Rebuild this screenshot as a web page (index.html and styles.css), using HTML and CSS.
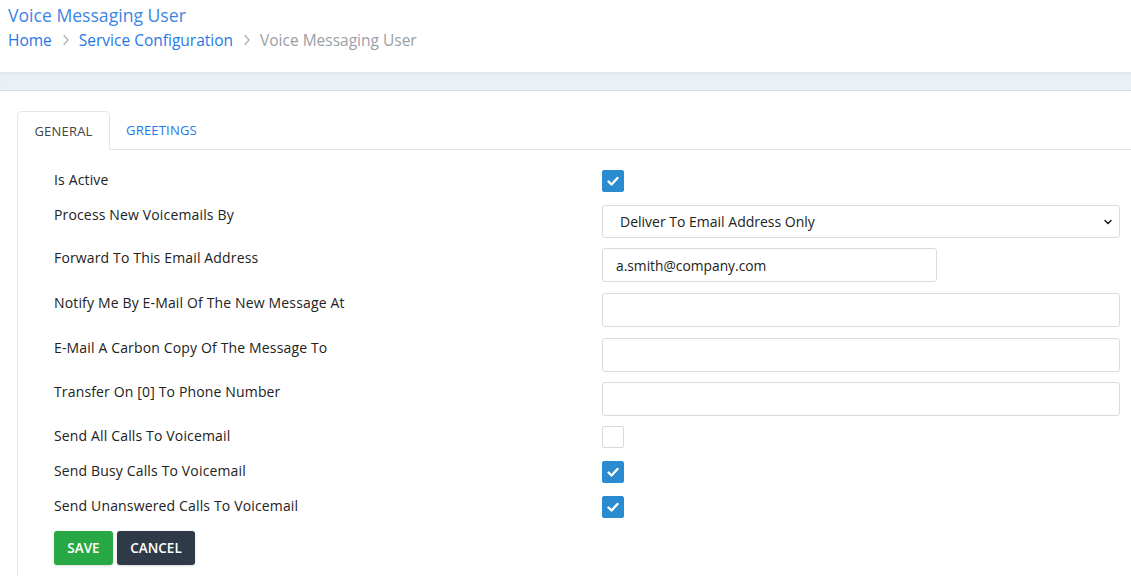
FILE: index.html
```html
<!DOCTYPE html>
<html lang="en">
<head>
<meta charset="utf-8">
<title>Voice Messaging User</title>
<link rel="stylesheet" href="styles.css">
</head>
<body>
<header class="page-header">
  <h1 class="page-title">Voice Messaging User</h1>
  <nav class="breadcrumb">
    <a class="crumb" href="#">Home</a>
    <svg class="sep" viewBox="0 0 8 12" width="8" height="12"><path d="M2 1.5 L6 6 L2 10.5" fill="none" stroke="#a8adb3" stroke-width="1.2" stroke-linecap="round" stroke-linejoin="round"/></svg>
    <a class="crumb" href="#">Service Configuration</a>
    <svg class="sep" viewBox="0 0 8 12" width="8" height="12"><path d="M2 1.5 L6 6 L2 10.5" fill="none" stroke="#a8adb3" stroke-width="1.2" stroke-linecap="round" stroke-linejoin="round"/></svg>
    <span class="crumb current">Voice Messaging User</span>
  </nav>
</header>
<div class="band"></div>
<main class="content">
  <div class="tabs">
    <div class="tab active">GENERAL</div>
    <div class="tab">GREETINGS</div>
    <div class="tab-fill"></div>
  </div>
  <div class="panel">
    <form class="form">
      <div class="row">
        <label class="label">Is Active</label>
        <div class="control"><span class="check on"><svg viewBox="0 0 22 22" width="22" height="22"><path d="M6.5 11.5 L9.5 14.5 L15.5 8" fill="none" stroke="#fff" stroke-width="2.4" stroke-linecap="round" stroke-linejoin="round"/></svg></span></div>
      </div>
      <div class="row">
        <label class="label">Process New Voicemails By</label>
        <div class="control">
          <div class="select">
            <span>Deliver To Email Address Only</span>
            <svg class="caret" viewBox="0 0 10 10" width="10" height="10"><path d="M2 3.5 L5 6.5 L8 3.5" fill="none" stroke="#222" stroke-width="1.6" stroke-linecap="round" stroke-linejoin="round"/></svg>
          </div>
        </div>
      </div>
      <div class="row tight3">
        <label class="label">Forward To This Email Address</label>
        <div class="control"><div class="input short">a.smith@company.com</div></div>
      </div>
      <div class="row tight2">
        <label class="label">Notify Me By E-Mail Of The New Message At</label>
        <div class="control"><div class="input"></div></div>
      </div>
      <div class="row tight2">
        <label class="label">E-Mail A Carbon Copy Of The Message To</label>
        <div class="control"><div class="input"></div></div>
      </div>
      <div class="row tight3">
        <label class="label">Transfer On [0] To Phone Number</label>
        <div class="control"><div class="input"></div></div>
      </div>
      <div class="row tight3">
        <label class="label">Send All Calls To Voicemail</label>
        <div class="control"><span class="check"></span></div>
      </div>
      <div class="row">
        <label class="label">Send Busy Calls To Voicemail</label>
        <div class="control"><span class="check on"><svg viewBox="0 0 22 22" width="22" height="22"><path d="M6.5 11.5 L9.5 14.5 L15.5 8" fill="none" stroke="#fff" stroke-width="2.4" stroke-linecap="round" stroke-linejoin="round"/></svg></span></div>
      </div>
      <div class="row">
        <label class="label">Send Unanswered Calls To Voicemail</label>
        <div class="control"><span class="check on"><svg viewBox="0 0 22 22" width="22" height="22"><path d="M6.5 11.5 L9.5 14.5 L15.5 8" fill="none" stroke="#fff" stroke-width="2.4" stroke-linecap="round" stroke-linejoin="round"/></svg></span></div>
      </div>
      <div class="actions">
        <button type="button" class="btn save">SAVE</button>
        <button type="button" class="btn cancel">CANCEL</button>
      </div>
    </form>
  </div>
</main>
</body>
</html>
```
FILE: styles.css
```css
* { box-sizing: border-box; }
html, body { margin: 0; padding: 0; }
body {
  font-family: "Open Sans", "Noto Sans", sans-serif;
  font-size: 14px;
  color: #222;
  background: #fff;
  width: 1131px;
  height: 576px;
  overflow: hidden;
}
.page-header {
  padding: 3px 8px 0 8px;
  height: 72px;
}
.page-title {
  margin: 0;
  font-size: 17.6px;
  font-weight: 400;
  line-height: 24px;
  color: #3c86e6;
}
.breadcrumb {
  margin-top: 2px;
  display: flex;
  align-items: center;
  font-size: 15.5px;
  line-height: 22px;
}
.crumb { color: #1f78e8; text-decoration: none; }
.crumb.current { color: #9aa0a6; }
.sep {
  display: block;
  margin: 0 9px 0 10px;
}
.band {
  height: 19px;
  background: #eaf1f5;
  border-top: 1px solid #e3eaef;
  border-bottom: 1px solid #d6dde3;
  box-shadow: inset 0 1px 2px rgba(0,0,0,0.04);
}
.content {
  padding: 20px 0 0 17px;
}
.tabs {
  display: flex;
  align-items: flex-end;
  height: 39px;
}
.tab {
  height: 39px;
  padding: 0 16px;
  display: flex;
  align-items: center;
  font-size: 13px;
  color: #1f78e8;
  border-bottom: 1px solid #e2e5e8;
  letter-spacing: 0.2px;
}
.tab.active {
  color: #444;
  border: 1px solid #e2e5e8;
  border-bottom-color: #fff;
  border-radius: 5px 5px 0 0;
  width: 93px;
  justify-content: center;
}
.tab-fill {
  flex: 1;
  height: 39px;
  border-bottom: 1px solid #e2e5e8;
}
.panel {
  border-left: 1px solid #e2e5e8;
  height: 440px;
  padding: 20px 11px 0 36px;
}
.form {
  display: flex;
  flex-direction: column;
  gap: 13px;
}
.row {
  display: grid;
  grid-template-columns: 548px 1fr;
  align-items: start;
}
.row.tight2 { margin-top: -2px; }
.row.tight3 { margin-top: -3px; }
.label {
  line-height: 20px;
  font-size: 14px;
  letter-spacing: 0.15px;
  color: #222;
}
.control { display: flex; }
.check {
  width: 22px;
  height: 22px;
  border: 1px solid #d9d9d9;
  border-radius: 2px;
  background: #fff;
  display: block;
}
.check.on {
  background: #2b8bd0;
  border-color: #2b8bd0;
}
.check svg { display: block; margin: -1px 0 0 -1px; }
.select {
  flex: 1;
  height: 33px;
  border: 1px solid #d8dce0;
  border-radius: 3px;
  display: flex;
  align-items: center;
  justify-content: space-between;
  padding: 0 6px 0 17px;
  font-size: 14px;
  color: #222;
}
.caret { display: block; }
.input {
  flex: 1;
  height: 34px;
  border: 1px solid #d8dce0;
  border-radius: 3px;
  display: flex;
  align-items: center;
  padding: 0 13px;
  font-size: 13.8px;
  color: #222;
}
.input.short { flex: 0 0 335px; }
.actions {
  display: flex;
  gap: 4px;
}
.btn {
  height: 34px;
  border: 0;
  border-radius: 3px;
  color: #fff;
  font-family: "Open Sans", sans-serif;
  font-size: 13.5px;
  font-weight: 600;
  padding: 0;
  box-shadow: 0 1px 3px rgba(0,0,0,0.15);
}
.btn.save { background: #28a745; width: 59px; }
.btn.cancel { background: #2e3a48; width: 78px; }
```
